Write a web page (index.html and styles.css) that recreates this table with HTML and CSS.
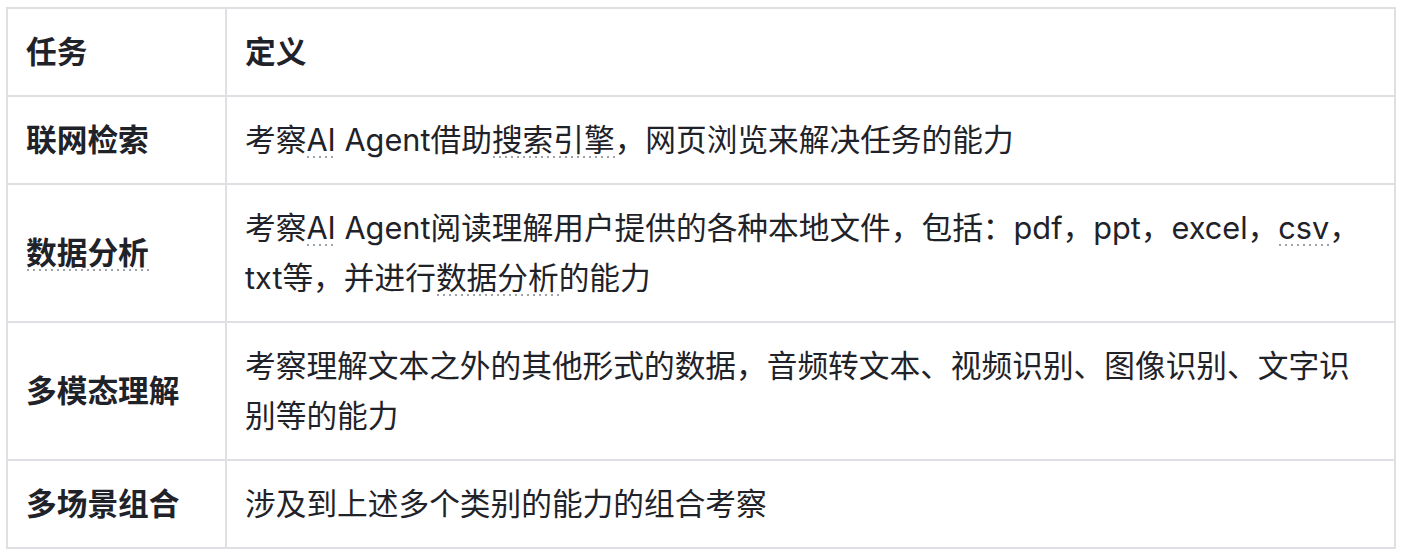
FILE: index.html
```html
<!DOCTYPE html>
<html lang="zh-CN">
<head>
<meta charset="utf-8">
<link rel="stylesheet" href="styles.css">
</head>
<body>
<table class="grid">
  <colgroup><col class="c1"><col class="c2"></colgroup>
  <thead>
    <tr><th>任务</th><th>定义</th></tr>
  </thead>
  <tbody>
    <tr><td class="task">联网检索</td><td>考察<span class="mark">AI</span> Agent借助<span class="mark">搜索引擎</span>，网页浏览来解决任务的能力</td></tr>
    <tr><td class="task"><span class="mark">数据分析</span></td><td>考察<span class="mark">AI</span> Agent阅读理解用户提供的各种本地文件，包括：pdf，ppt，excel，<span class="mark">csv</span>，txt等，并进行<span class="mark">数据分析</span>的能力</td></tr>
    <tr><td class="task">多模态理解</td><td>考察理解文本之外的其他形式的数据，音频转文本、视频识别、图像识别、文字识别等的能力</td></tr>
    <tr><td class="task">多场景组合</td><td>涉及到上述多个类别的能力的组合考察</td></tr>
  </tbody>
</table>
</body>
</html>
```
FILE: styles.css
```css
html, body {
  margin: 0;
  background: #ffffff;
}
body {
  padding: 7px 10px 0 6px;
  font-family: Inter, "Noto Sans CJK SC", sans-serif;
  color: #1f2329;
}
.grid {
  width: 1390px;
  border-collapse: collapse;
  table-layout: fixed;
  font-size: 30.7px;
  line-height: 50px;
}
.c1 { width: 219px; }
.grid th, .grid td {
  border: 2px solid #dee0e3;
  padding: 18px 18px 18px 18px;
  text-align: left;
  vertical-align: middle;
  font-weight: 400;
}
.grid th, .grid td.task {
  font-weight: 600;
}
.mark {
  background-image: linear-gradient(to right, #9ea3aa 0 2px, transparent 2px 100%);
  background-size: 6px 2px;
  background-repeat: repeat-x;
  background-position: 1px 100%;
}
```
